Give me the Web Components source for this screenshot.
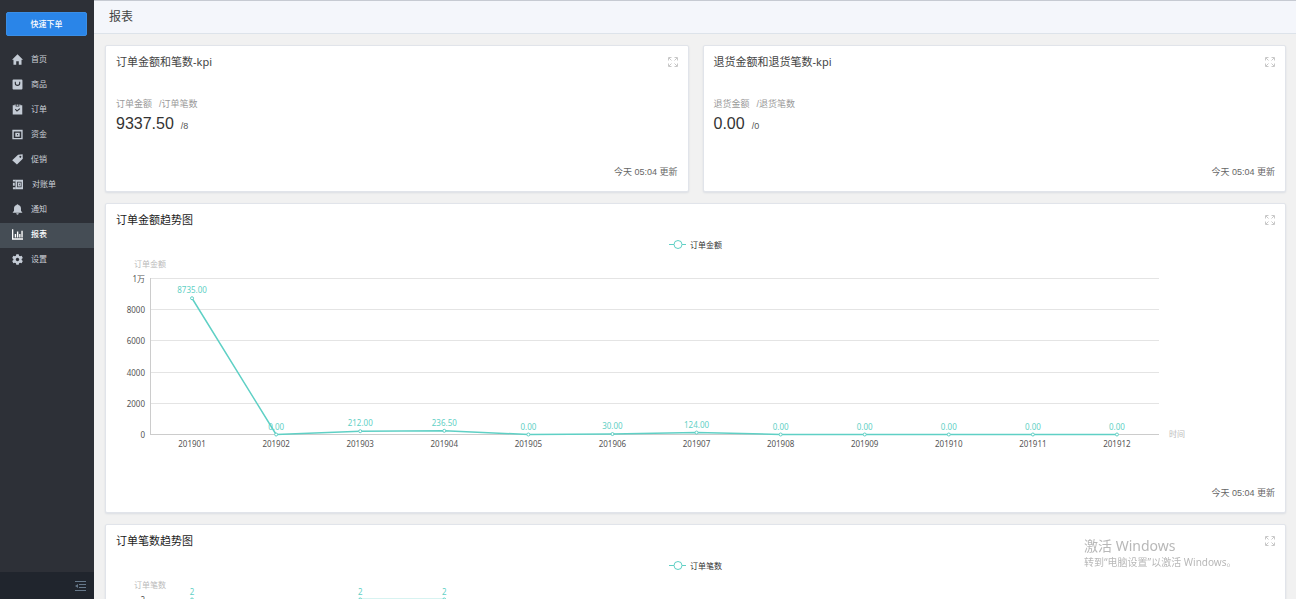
<!DOCTYPE html>
<html lang="zh-CN">
<head>
<meta charset="utf-8">
<title>报表</title>
<style>
  html, body { margin: 0; height: 100%; }
  body { font-family: "Noto Sans", "Noto Sans CJK SC", sans-serif; background: #f1f1f1; color: #333; overflow: hidden; }
</style>
</head>
<body>
<report-app>
  <side-bar slot="side">
    <nav-item icon="home">首页</nav-item>
    <nav-item icon="bag">商品</nav-item>
    <nav-item icon="order">订单</nav-item>
    <nav-item icon="fund">资金</nav-item>
    <nav-item icon="tag">促销</nav-item>
    <nav-item icon="ledger" wide>对账单</nav-item>
    <nav-item icon="bell">通知</nav-item>
    <nav-item icon="chart" active>报表</nav-item>
    <nav-item icon="gear">设置</nav-item>
  </side-bar>
  <span slot="title">报表</span>
  <report-card heading="订单金额和笔数-kpi">
    <kpi-figure label="订单金额" sublabel="/订单笔数" value="9337.50" subvalue="/8"></kpi-figure>
  </report-card>
  <report-card heading="退货金额和退货笔数-kpi">
    <kpi-figure label="退货金额" sublabel="/退货笔数" value="0.00" subvalue="/0"></kpi-figure>
  </report-card>
  <report-card heading="订单金额趋势图" strong>
    <trend-chart name="订单金额" ticks="0,2000,4000,6000,8000,1万" max="10000" decimals="2"
      values="8735,0,212,236.5,0,30,124,0,0,0,0,0"></trend-chart>
  </report-card>
  <report-card heading="订单笔数趋势图" strong>
    <trend-chart name="订单笔数" ticks="0,1,2" max="2" decimals="0"
      values="2,0,2,2,0,1,1,0,0,0,0,0"></trend-chart>
  </report-card>
</report-app>
<activation-note></activation-note>

<script>
const ICONS = {
  home: '<path d="M6 .4 12 6.200H10.400V11.600H7.400V8H4.600v3.600H1.600V6.200H0Z"/>',
  bag: '<path fill-rule="evenodd" d="M1.600.6h8.800a1 1 0 0 1 1 1v8.800a1 1 0 0 1-1 1H1.600a1 1 0 0 1-1-1V1.600a1 1 0 0 1 1-1ZM3 3v1.600a3 3 0 0 0 6 0V3H7.800v1.600a1.800 1.800 0 0 1-3.600 0V3Z"/>',
  order: '<path fill-rule="evenodd" d="M.8 1.400h2V.6h1.200v2.200h4V.6h1.200v.8h2v10H.8ZM3.200 6l2.200 2.400 3.600-3-.8-.9-2.700 2.200L4 5.200Z"/><path d="M5 .6h2v1.400H5Z"/>',
  fund: '<path fill-rule="evenodd" d="M.4.8h11.200v10.400H.4ZM1.900 2.800v6.900h8.200V2.800Z"/><path fill-rule="evenodd" d="M3.600 4h4.800v4.400H3.600Zm1.900 1.500v1.400h1V5.500Z"/>',
  tag: '<path fill-rule="evenodd" d="M6.600.8 11.600.4l.2 4.800-6.400 6.200L.2 6.800Zm2.500 1.200a1 1 0 1 0 .02 0Z"/>',
  ledger: '<path fill-rule="evenodd" d="M3.800.8H12v10.400H3.800Zm1.800 2.200v6h4.800V3Z"/><path fill-rule="evenodd" d="M6.400 3.800h3.200v4.400H6.400Zm1.200 1.400v1.600h.8V5.200Z"/><path d="M1 .8h3v2H1Zm0 3.400h2v3.200H1Zm0 4.800h3v2.200H1Z"/>',
  bell: '<path d="M6 .2a1 1 0 0 1 1 1C8.900 1.700 9.800 3.300 9.800 5v2.400L11.400 9.600H.6l1.600-2.200V5c0-1.700.9-3.300 2.800-3.800a1 1 0 0 1 1-1ZM4.600 10.200h2.800a1.400 1.400 0 0 1-2.800 0Z"/>',
  chart: '<path d="M0 .4h1.400v9.800H12v1.400H0ZM3 5.400h1.500v3.800H3ZM5.400 2.800h1.500v6.400H5.400ZM7.800 5.400h1.500v3.800H7.800ZM10.200 1.800h1.500v7.400H10.200Z"/>',
  gear: '<path fill-rule="evenodd" d="M4.700.2h2.600l.4 1.700 1.100.6 1.700-.5 1.300 2.300-1.300 1.100v1.200l1.300 1.100-1.300 2.300-1.700-.5-1.100.6-.4 1.700H4.700l-.4-1.700-1.100-.6-1.700.5L.2 7.700l1.300-1.100V5.400L.2 4.300 1.500 2l1.700.5 1.100-.6ZM6 4.100a1.900 1.900 0 1 0 .01 0Z"/>'
};

function attachTemplate(host, html) {
  const template = document.createElement('template');
  template.innerHTML = html;
  host.attachShadow({ mode: 'open' }).append(template.content.cloneNode(true));
}

customElements.define('report-app', class extends HTMLElement {
  constructor() {
    super();
    attachTemplate(this, `
      <style>
        :host { display: grid; grid-template-columns: 94px 1fr; height: 100vh; }
        .page { display: flex; flex-direction: column; min-width: 0; min-height: 0; }
        header { flex: none; box-sizing: border-box; height: 34px; padding: 0 15px; display: flex; align-items: center;
          background: #f4f6fb; border-top: 1px solid #c6cad2; border-bottom: 1px solid #dde3ea; }
        h1 { margin: 0; font-size: 12px; line-height: 16px; font-weight: 400; color: #444; }
        main { flex: 1; min-height: 0; overflow-y: auto; scrollbar-width: none; padding: 11px 10px 11px 11px;
          display: grid; grid-template-columns: 1fr 1fr; gap: 11px 14px; align-content: start; }
        ::slotted(report-card[strong]) { grid-column: 1 / -1; }
      </style>
      <slot name="side"></slot>
      <div class="page">
        <header><h1><slot name="title"></slot></h1></header>
        <main><slot></slot></main>
      </div>`);
  }
});

customElements.define('side-bar', class extends HTMLElement {
  constructor() {
    super();
    attachTemplate(this, `
      <style>
        :host { display: flex; flex-direction: column; background: #2d3037; min-height: 0; }
        .order { margin: 12px 7px 12px 6px; height: 24px; padding: 0; border: 1px solid #3a8ee6; border-radius: 2px;
          background: #2a85e8; color: #fff; font: 500 8px/12px "Noto Sans", "Noto Sans CJK SC", sans-serif; }
        nav { flex: 1; }
        footer { height: 27px; background: #20252d; display: flex; align-items: center; justify-content: flex-end; padding-right: 8px; }
        .fold { border: 0; padding: 0; background: none; height: 10px; }
        svg { display: block; }
      </style>
      <button class="order" type="button">快速下单</button>
      <nav><slot></slot></nav>
      <footer><button class="fold" type="button" aria-label="收起菜单">
        <svg width="11" height="10" viewBox="0 0 11 10" fill="#66788a"><path d="M0 0h11v1H0ZM4 3h7v1H4ZM4 6h7v1H4ZM0 9h11v1H0ZM0 5l3-2v4Z"/></svg>
      </button></footer>`);
  }
});

customElements.define('nav-item', class extends HTMLElement {
  constructor() {
    super();
    attachTemplate(this, `
      <style>
        :host { display: block; }
        a { box-sizing: border-box; height: 25px; padding: 0 0 3px 12px; display: flex; align-items: center; gap: 8px;
          color: #ccd1d8; text-decoration: none; font-size: 8px; line-height: 12px; }
        :host([wide]) a { gap: 9px; }
        :host([active]) a { background: #454d55; color: #fff; font-weight: 500; }
        svg { flex: none; fill: #c4cbd5; }
        :host([active]) svg { fill: #fff; }
      </style>
      <a href="#"><svg width="11" height="11" viewBox="0 0 12 12" aria-hidden="true"></svg><span><slot></slot></span></a>`);
  }
  connectedCallback() {
    this.shadowRoot.querySelector('svg').innerHTML = ICONS[this.getAttribute('icon')];
  }
});

customElements.define('report-card', class extends HTMLElement {
  constructor() {
    super();
    attachTemplate(this, `
      <style>
        :host { display: block; box-sizing: border-box; min-width: 0; padding: 0 10px 9px; background: #fff;
          border: 1px solid #e1e4ea; border-radius: 2px; box-shadow: 0 1px 2px rgba(60, 80, 120, .12); }
        header { height: 32px; display: flex; align-items: center; justify-content: space-between; }
        h2 { margin: 0; font-size: 11px; line-height: 16px; font-weight: 400; color: #444; }
        :host([strong]) h2 { color: #1c1c1c; }
        button { border: 0; padding: 0; background: none; height: 10px; }
        svg { display: block; }
        footer { font-size: 9px; line-height: 20px; text-align: right; color: #666;
          font-family: "Liberation Sans", "Noto Sans CJK SC", sans-serif; }
      </style>
      <header><h2></h2><button type="button" aria-label="全屏">
        <svg width="10" height="10" viewBox="0 0 10 10" fill="none" stroke="#c8c8c8"><path d="M.5 3.500V.5h3M6.500.5h3v3M9.500 6.500v3h-3M3.500 9.500h-3v-3M1 1l2.500 2.500M9 1 6.500 3.500M9 9 6.500 6.500M1 9l2.500-2.500"/></svg>
      </button></header>
      <slot></slot>
      <footer>今天 05:04 更新</footer>`);
  }
  connectedCallback() {
    this.shadowRoot.querySelector('h2').textContent = this.getAttribute('heading');
  }
});

customElements.define('kpi-figure', class extends HTMLElement {
  constructor() {
    super();
    attachTemplate(this, `
      <style>
        :host { display: block; padding: 18px 0 27px; font-family: "Liberation Sans", "Noto Sans CJK SC", sans-serif; }
        div { display: flex; align-items: baseline; gap: 7px; }
        .names { font-size: 9px; line-height: 16px; color: #999; }
        .values { font-size: 16px; line-height: 23px; color: #333; }
        .subvalue { font-size: 9px; line-height: 10px; color: #555; }
      </style>
      <div class="names"><span class="label"></span><span class="sublabel"></span></div>
      <div class="values"><span class="value"></span><span class="subvalue"></span></div>`);
  }
  connectedCallback() {
    for (const key of ['label', 'sublabel', 'value', 'subvalue'])
      this.shadowRoot.querySelector('.' + key).textContent = this.getAttribute(key);
  }
});

customElements.define('trend-chart', class extends HTMLElement {
  constructor() {
    super();
    attachTemplate(this, `
      <style>
        :host { display: block; height: 247px; }
        svg { display: block; width: 100%; height: 100%; font-size: 8px; }
        .grid { stroke: #e4e4e4; }
        .axis { stroke: #ccc; }
        .tick { fill: #555; }
        .name { fill: #bbb; }
        .legend { fill: #333; }
        .label { fill: #5fd0c5; text-anchor: middle; }
        .middle { text-anchor: middle; }
        .end { text-anchor: end; }
        .line { fill: none; stroke: #5fd0c5; stroke-width: 1.5; stroke-linejoin: round; }
        .mark { fill: #fff; stroke: #5fd0c5; }
      </style>
      <svg></svg>`);
  }
  connectedCallback() {
    this.draw();
    new ResizeObserver(() => this.draw()).observe(this);
  }
  draw() {
    const width = this.clientWidth;
    if (!width) return;
    const values = this.getAttribute('values').split(',').map(Number);
    const ticks = this.getAttribute('ticks').split(',');
    const max = Number(this.getAttribute('max'));
    const decimals = Number(this.getAttribute('decimals'));
    const name = this.getAttribute('name');
    const left = 34, right = width - 116, top = 42, bottom = 198;
    const band = (right - left) / values.length;
    const points = values.map((v, i) => [left + band * (i + .5), bottom + .5 - v / max * (bottom - top)]);
    const centre = Math.round(width / 2);
    let out = '';
    ticks.forEach((t, i) => {
      const y = Math.round(bottom - (bottom - top) * i / (ticks.length - 1));
      out += `<path class="${i ? 'grid' : 'axis'}" d="M${left} ${y + .5}H${right}"/>
        <text class="tick end" x="${left - 5}" y="${y + 4}">${t}</text>`;
    });
    out += `<path class="axis" d="M${left + .5} ${top}V${bottom + 1}"/>
      <text class="name middle" x="${left}" y="31">${name}</text>
      <text class="name" x="${right + 10}" y="${bottom + 3}">时间</text>
      <path class="mark" d="M${centre - 27} 8.5H${centre - 10}"/>
      <circle class="mark" cx="${centre - 18}" cy="8.5" r="4"/>
      <text class="legend" x="${centre - 6}" y="12">${name}</text>
      <polyline class="line" points="${points.join(' ')}"/>`;
    points.forEach(([x, y], i) => {
      const month = '2019' + String(i + 1).padStart(2, '0');
      out += `<circle class="mark" cx="${x}" cy="${y}" r="1.500"/>
        <text class="label" x="${x}" y="${y - 5}">${values[i].toFixed(decimals)}</text>
        <text class="tick middle" x="${x}" y="${bottom + 13}">${month}</text>`;
    });
    this.shadowRoot.querySelector('svg').innerHTML = out;
  }
});

customElements.define('activation-note', class extends HTMLElement {
  constructor() {
    super();
    attachTemplate(this, `
      <style>
        :host { position: fixed; right: 56px; bottom: 30px; width: 156px; color: #b8b8b8; pointer-events: none; white-space: nowrap; }
        p { margin: 0; font-size: 10px; line-height: 14px; }
        .title { font-size: 14px; line-height: 18px; }
      </style>
      <p class="title">激活 Windows</p>
      <p>转到“电脑设置”以激活 Windows。</p>`);
  }
});
</script>
</body>
</html>
